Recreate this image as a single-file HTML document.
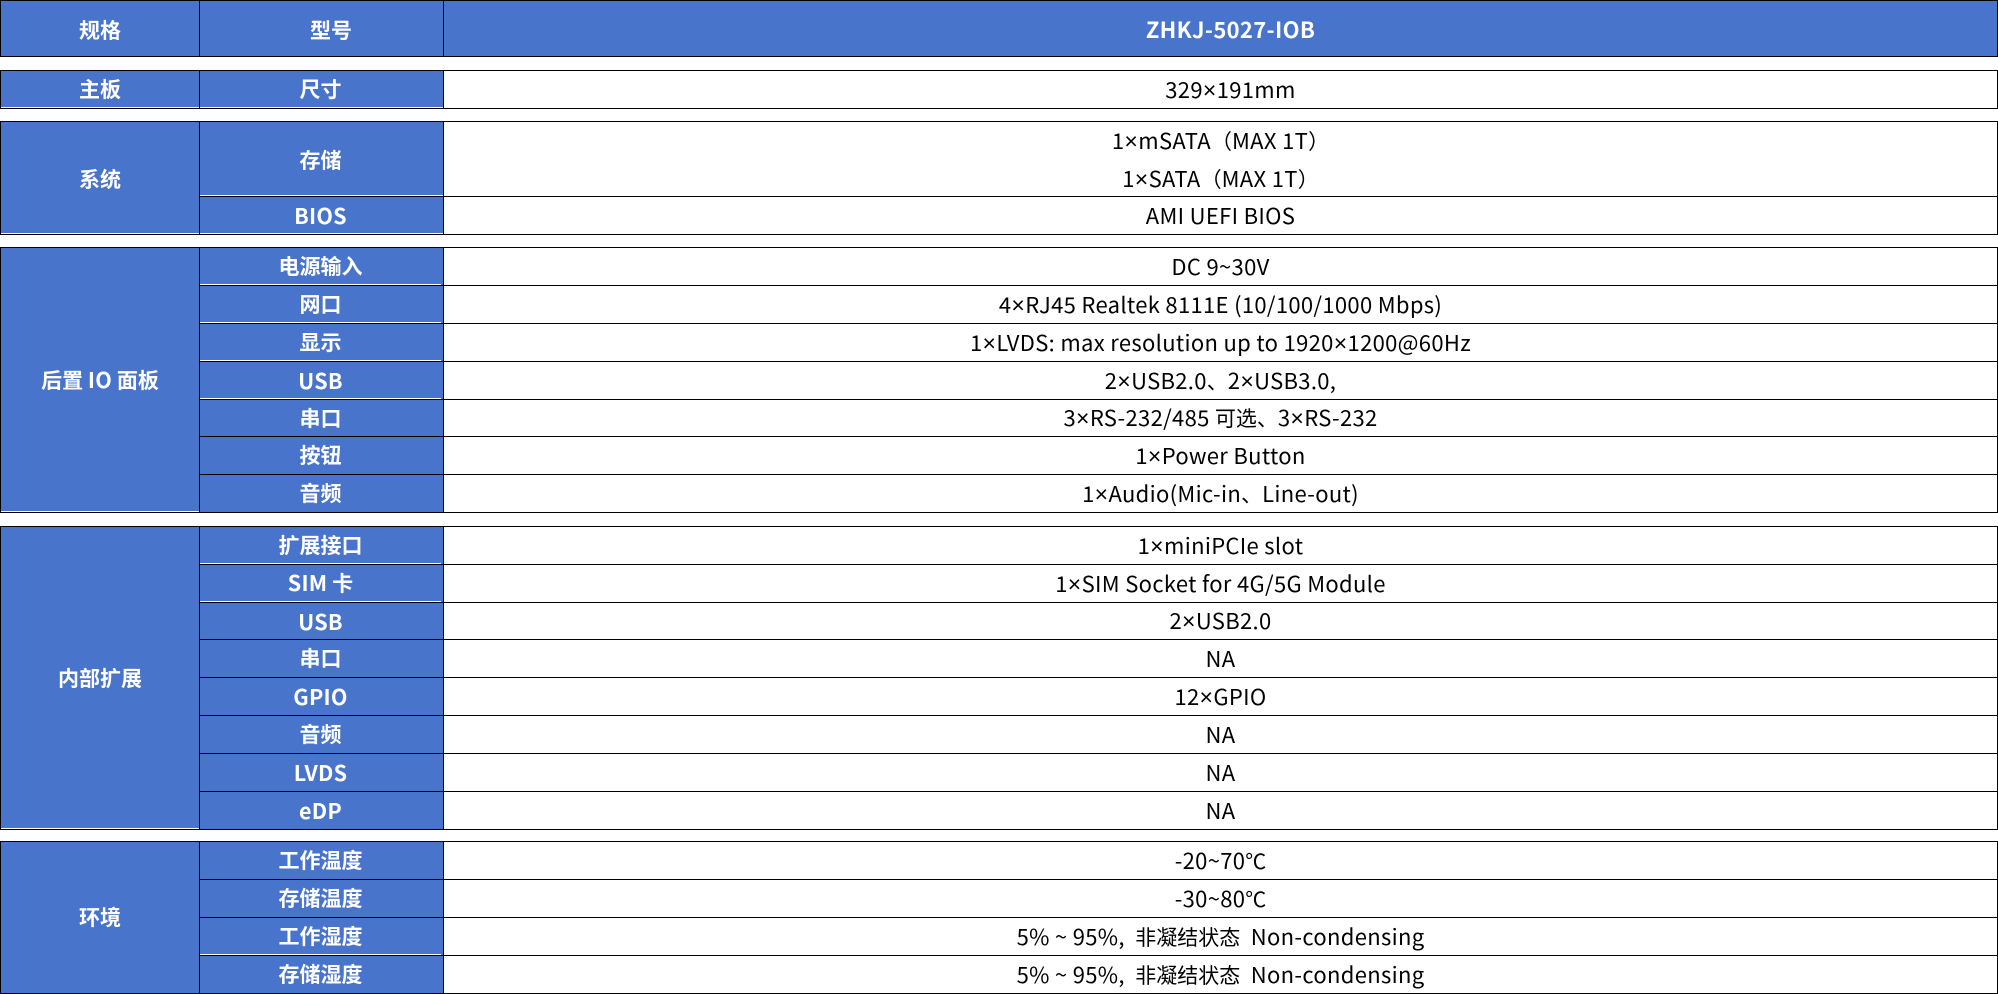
<!DOCTYPE html>
<html><head><meta charset="utf-8"><title>ZHKJ-5027-IOB</title>
<style>
html,body{margin:0;padding:0;background:#fff;width:1998px;height:994px;overflow:hidden}
body{position:relative;font:21px/37px "Noto Sans CJK SC","Liberation Sans",sans-serif;color:#000}
.c{position:absolute;display:flex;align-items:center;justify-content:center;white-space:pre;text-align:center;box-sizing:border-box}
.k{background:#4874cb;color:#fff;font-weight:700;border-bottom:0 solid #fff}
.a{left:1px;width:198px}
.m{left:200px;width:241px}
.mb{position:absolute;background:#4874cb;left:441px;width:2px}
.d{left:444px;width:1553px}
.p{padding-left:20px}
.d>div{font-size:22px;letter-spacing:.32px}
.l{font-size:21.5px;letter-spacing:.25px}
.z{font-size:21px;letter-spacing:0}
.x{font-family:"Liberation Sans",sans-serif;font-size:23px;letter-spacing:.4px}
.w{border-bottom-width:1px}
.h,.v{position:absolute;background:#000}
.h{left:0;width:1998px;height:1px}
.r{left:200px;width:1798px}
.v{width:1px}
</style></head><body>
<div class="c k a" style="top:1px;height:55px;padding-top:4px">规格</div>
<div class="c k" style="left:200px;width:262px;top:1px;height:55px;padding-top:4px;background:none;z-index:2">型号</div>
<div class="c k" style="left:200px;width:243px;top:1px;height:55px"></div>
<div class="c k d p" style="top:1px;height:55px;padding-top:2px"><div>ZHKJ-5027-IOB</div></div>

<div class="c k a w" style="top:71px;height:37px">主板</div>
<div class="mb" style="top:71px;height:36px"></div><div class="c k m w" style="top:71px;height:37px">尺寸</div>
<div class="c d p" style="top:71px;height:37px"><div>329<span class="x">×</span>191mm</div></div>

<div class="c k a w" style="top:122px;height:112px;padding-top:3px">系统</div>
<div class="mb" style="top:122px;height:73px"></div><div class="c k m w" style="top:122px;height:74px;padding-top:4px">存储</div>
<div class="c d" style="top:122px;height:74px;padding-top:1px"><div>1<span class="x">×</span>mSATA<span class="z">（</span>MAX 1T<span class="z">）</span><br>1<span class="x">×</span>SATA<span class="z">（</span>MAX 1T<span class="z">）</span></div></div>
<div class="mb" style="top:197px;height:36px"></div><div class="c k m w l" style="top:197px;height:37px">BIOS</div>
<div class="c d" style="top:197px;height:37px"><div>AMI UEFI BIOS</div></div>

<div class="c k a w" style="top:248px;height:264px"><div>后置 <span class="l">IO</span> 面板</div></div>
<div class="mb" style="top:248px;height:264px"></div>
<div class="c k m w" style="top:248px;height:37px">电源输入</div><div class="c d" style="top:248px;height:37px"><div>DC 9~30V</div></div>
<div class="c k m w" style="top:286px;height:37px">网口</div><div class="c d" style="top:286px;height:37px"><div>4<span class="x">×</span>RJ45 Realtek 8111E (10/100/1000 Mbps)</div></div>
<div class="c k m w" style="top:324px;height:37px">显示</div><div class="c d" style="top:324px;height:37px"><div>1<span class="x">×</span>LVDS: max resolution up to 1920<span class="x">×</span>1200@60Hz</div></div>
<div class="c k m w l" style="top:362px;height:37px">USB</div><div class="c d" style="top:362px;height:37px"><div>2<span class="x">×</span>USB2.0<span class="z">、</span>2<span class="x">×</span>USB3.0,</div></div>
<div class="c k m" style="top:400px;height:36px">串口</div><div class="c d" style="top:400px;height:36px"><div>3<span class="x">×</span>RS-232/485 <span class="z">可选、</span>3<span class="x">×</span>RS-232</div></div>
<div class="c k m" style="top:437px;height:37px">按钮</div><div class="c d" style="top:437px;height:37px"><div>1<span class="x">×</span>Power Button</div></div>
<div class="c k m" style="top:475px;height:37px">音频</div><div class="c d" style="top:475px;height:37px"><div>1<span class="x">×</span>Audio(Mic-in<span class="z">、</span>Line-out)</div></div>

<div class="c k a" style="top:527px;height:302px;border-bottom:1px solid #fff;padding-top:2px">内部扩展</div>
<div class="mb" style="top:527px;height:302px"></div>
<div class="c k m w" style="top:527px;height:37px">扩展接口</div><div class="c d" style="top:527px;height:37px"><div>1<span class="x">×</span>miniPCIe slot</div></div>
<div class="c k m w" style="top:565px;height:37px"><div><span class="l">SIM</span> 卡</div></div><div class="c d" style="top:565px;height:37px"><div>1<span class="x">×</span>SIM Socket for 4G/5G Module</div></div>
<div class="c k m l" style="top:603px;height:36px">USB</div><div class="c d" style="top:603px;height:36px"><div>2<span class="x">×</span>USB2.0</div></div>
<div class="c k m" style="top:640px;height:37px">串口</div><div class="c d" style="top:640px;height:37px"><div>NA</div></div>
<div class="c k m l" style="top:678px;height:37px">GPIO</div><div class="c d" style="top:678px;height:37px"><div>12<span class="x">×</span>GPIO</div></div>
<div class="c k m" style="top:716px;height:37px">音频</div><div class="c d" style="top:716px;height:37px"><div>NA</div></div>
<div class="c k m l" style="top:754px;height:37px">LVDS</div><div class="c d" style="top:754px;height:37px"><div>NA</div></div>
<div class="c k m l" style="top:792px;height:37px">eDP</div><div class="c d" style="top:792px;height:37px"><div>NA</div></div>

<div class="c k a" style="top:842px;height:151px">环境</div>
<div class="mb" style="top:842px;height:151px"></div>
<div class="c k m" style="top:842px;height:37px">工作温度</div><div class="c d" style="top:842px;height:37px"><div>-20~70<span class="z">℃</span></div></div>
<div class="c k m" style="top:880px;height:37px">存储温度</div><div class="c d" style="top:880px;height:37px"><div>-30~80<span class="z">℃</span></div></div>
<div class="c k m w" style="top:918px;height:37px">工作湿度</div><div class="c d" style="top:918px;height:37px"><div>5% ~ 95%,  <span class="z">非凝结状态</span>  Non-condensing</div></div>
<div class="c k m" style="top:956px;height:37px">存储湿度</div><div class="c d" style="top:956px;height:37px"><div>5% ~ 95%,  <span class="z">非凝结状态</span>  Non-condensing</div></div>

<div class="h" style="top:0"></div><div class="h" style="top:56px"></div>
<div class="h" style="top:70px"></div><div class="h" style="top:108px"></div>
<div class="h" style="top:121px"></div><div class="h" style="top:234px"></div>
<div class="h" style="top:247px"></div><div class="h" style="top:512px"></div>
<div class="h" style="top:526px"></div><div class="h" style="top:829px"></div>
<div class="h" style="top:841px"></div><div class="h" style="top:993px"></div>
<div class="h r" style="top:196px"></div>
<div class="h r" style="top:285px"></div>
<div class="h r" style="top:323px"></div>
<div class="h r" style="top:361px"></div>
<div class="h r" style="top:399px"></div>
<div class="h r" style="top:436px"></div>
<div class="h r" style="top:474px"></div>
<div class="h r" style="top:564px"></div>
<div class="h r" style="top:602px"></div>
<div class="h r" style="top:639px"></div>
<div class="h r" style="top:677px"></div>
<div class="h r" style="top:715px"></div>
<div class="h r" style="top:753px"></div>
<div class="h r" style="top:791px"></div>
<div class="h r" style="top:879px"></div>
<div class="h r" style="top:917px"></div>
<div class="h r" style="top:955px"></div>

<div class="v" style="left:0;top:0;height:57px"></div><div class="v" style="left:199px;top:0;height:57px;z-index:3"></div><div class="v" style="left:443px;top:0;height:57px"></div><div class="v" style="left:1997px;top:0;height:57px"></div>
<div class="v" style="left:0;top:70px;height:39px"></div><div class="v" style="left:199px;top:70px;height:39px"></div><div class="v" style="left:443px;top:70px;height:39px"></div><div class="v" style="left:1997px;top:70px;height:39px"></div>
<div class="v" style="left:0;top:121px;height:114px"></div><div class="v" style="left:199px;top:121px;height:114px"></div><div class="v" style="left:443px;top:121px;height:114px"></div><div class="v" style="left:1997px;top:121px;height:114px"></div>
<div class="v" style="left:0;top:247px;height:266px"></div><div class="v" style="left:199px;top:247px;height:266px"></div><div class="v" style="left:443px;top:247px;height:266px"></div><div class="v" style="left:1997px;top:247px;height:266px"></div>
<div class="v" style="left:0;top:526px;height:304px"></div><div class="v" style="left:199px;top:526px;height:304px"></div><div class="v" style="left:443px;top:526px;height:304px"></div><div class="v" style="left:1997px;top:526px;height:304px"></div>
<div class="v" style="left:0;top:841px;height:153px"></div><div class="v" style="left:199px;top:841px;height:153px"></div><div class="v" style="left:443px;top:841px;height:153px"></div><div class="v" style="left:1997px;top:841px;height:153px"></div>
</body></html>
